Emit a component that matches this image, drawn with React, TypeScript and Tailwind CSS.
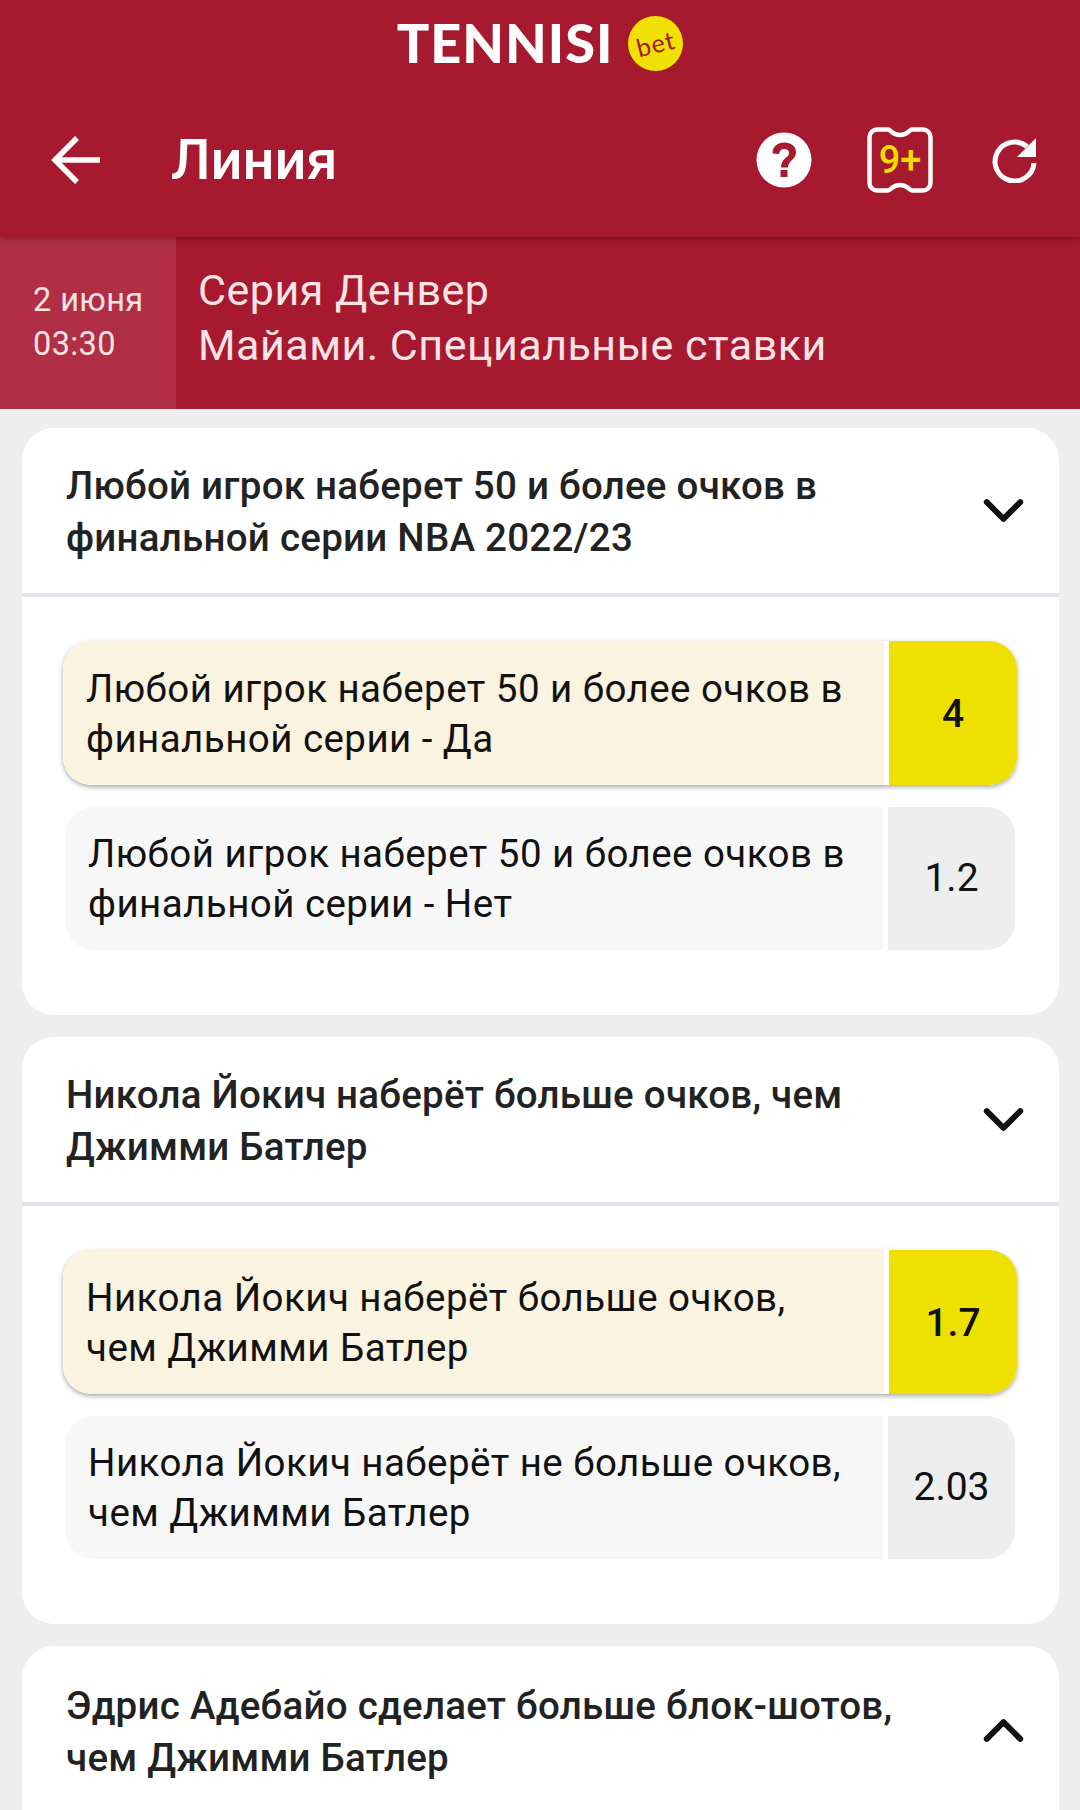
import { ChevronDown, ChevronUp } from 'lucide-react';

const markets = [
  {
    title: 'Любой игрок наберет 50 и более очков в финальной серии NBA 2022/23',
    rows: [
      { text: 'Любой игрок наберет 50 и более очков в финальной серии - Да', odds: '4' },
      { text: 'Любой игрок наберет 50 и более очков в финальной серии - Нет', odds: '1.2' },
    ],
  },
  {
    title: 'Никола Йокич наберёт больше очков, чем Джимми Батлер',
    rows: [
      { text: 'Никола Йокич наберёт больше очков, чем Джимми Батлер', odds: '1.7' },
      { text: 'Никола Йокич наберёт не больше очков, чем Джимми Батлер', odds: '2.03' },
    ],
  },
];

function Logo() {
  return (
    <div className="flex h-[86px] items-center justify-center">
      <span className="font-['Lato'] text-[54px] leading-none font-black tracking-[1px] text-white">TENNISI</span>
      <div className="ml-[15px] flex h-[55px] w-[55px] items-center justify-center rounded-full bg-[#f0e100]">
        <span className="-rotate-[14deg] font-['Lato'] text-[25px] leading-none tracking-[1px] text-[#a3192f]">bet</span>
      </div>
    </div>
  );
}

function BackIcon() {
  return (
    <svg width="50" height="50" viewBox="0 0 50 50" fill="none" stroke="white" strokeWidth="5.500">
      <path d="M49 25H5" />
      <path d="M26 3L4 25L26 47" />
    </svg>
  );
}

function HelpIcon() {
  return (
    <svg width="56" height="56" viewBox="0 0 56 56">
      <circle cx="28" cy="28" r="27.500" fill="white" />
      <path d="M16.500 21.500c0-7 5-11 11.800-11 6.800 0 11.700 3.800 11.700 9.700 0 7.800-8 8-8 15.300h-7c0-9.500 8-9.500 8-14.700 0-2.200-1.900-3.800-4.700-3.800-3 0-5 1.900-5.200 5z" fill="#a6192e" />
      <rect x="24.500" y="38" width="7" height="7" fill="#a6192e" />
    </svg>
  );
}

function CouponIcon() {
  return (
    <div className="relative flex h-[66px] w-[66px] items-center justify-center">
      <svg className="absolute inset-0" width="66" height="66" viewBox="0 0 66 66" fill="none" stroke="white" strokeWidth="4.500">
        <path d="M10 2.500H21C24 2.500 25 8 33 8C41 8 42 2.500 45 2.500H56C60 2.500 63.500 6 63.500 10V56C63.500 60 60 63.500 56 63.500H45C42 63.500 41 58 33 58C25 58 24 63.500 21 63.500H10C6 63.500 2.500 60 2.500 56V10C2.500 6 6 2.500 10 2.500Z" />
      </svg>
      <span className="relative font-['Roboto'] text-[38px] leading-none font-medium text-[#f5dc00]">9+</span>
    </div>
  );
}

function RefreshIcon() {
  return (
    <svg width="46" height="46" viewBox="0 0 46 46" fill="none">
      <path d="M35 9.500A19.500 19.500 0 1 0 42 26" stroke="white" strokeWidth="5" />
      <path d="M44 1V20H25z" fill="white" />
    </svg>
  );
}

function OutcomeRow({ text, odds, selected }: { text: string; odds: string; selected: boolean }) {
  return (
    <div
      className={
        selected
          ? 'flex h-[144px] overflow-hidden rounded-[28px] bg-white shadow-[0_2px_5px_rgba(0,0,0,0.35)]'
          : 'mx-[2px] flex h-[143px] overflow-hidden rounded-[28px] bg-white'
      }
    >
      <div
        className={
          selected
            ? 'flex flex-1 items-center bg-[#f9f3df] pl-[23px] pr-[30px] pt-[2px]'
            : 'flex flex-1 items-center bg-[#f7f7f7] pl-[23px] pr-[30px]'
        }
      >
        <p className="text-[38.5px] leading-[50px] tracking-[0.45px] text-[#111]">{text}</p>
      </div>
      <div
        className={
          selected
            ? 'ml-[5px] flex w-[128px] items-center justify-center bg-[#eee100] pt-[2px] text-[39px] font-medium text-[#111]'
            : 'ml-[5px] flex w-[127px] items-center justify-center bg-[#eeeeee] text-[39px] text-[#111]'
        }
      >
        {odds}
      </div>
    </div>
  );
}

export default function App() {
  return (
    <div className="h-[1810px] w-[1080px] overflow-hidden bg-[#eeeeee] font-['Roboto',sans-serif]">
      <header className="relative z-10 h-[237px] bg-[#a6192e] shadow-[0_2px_6px_rgba(0,0,0,0.25)]">
        <Logo />
        <div className="flex h-[147px] items-center pl-[51px] pr-[42px]">
          <BackIcon />
          <h1 className="ml-[70px] flex-1 text-[56px] font-medium text-white">Линия</h1>
          <HelpIcon />
          <div className="ml-[55px]">
            <CouponIcon />
          </div>
          <div className="ml-[59px]">
            <RefreshIcon />
          </div>
        </div>
      </header>

      <div className="flex h-[172px] bg-[#a6192e]">
        <div className="flex w-[176px] flex-col justify-center bg-[#b02f44] pb-[2px] pl-[33px] text-[32.5px] leading-[44px] tracking-[0.4px] text-[#fbe3e6]">
          <div>2 июня</div>
          <div>03:30</div>
        </div>
        <div className="flex flex-1 flex-col justify-center pb-[11px] pl-[22px] text-[43px] leading-[55px] tracking-[0.5px] text-[#fbe3e6]">
          <div>Серия Денвер</div>
          <div>Майами. Специальные ставки</div>
        </div>
      </div>

      <main className="flex flex-col gap-[22px] pl-[22px] pr-[21px] pt-[19px]">
        {markets.map((m) => (
          <section key={m.title} className="h-[587px] rounded-[32px] bg-white">
            <div className="flex h-[169px] items-center justify-between border-b-[4px] border-[#e2e2ea] pl-[44px] pr-[22px]">
              <h2 className="w-[840px] pt-[2px] text-[38.5px] leading-[52px] font-medium tracking-[0.25px] text-[#222]">{m.title}</h2>
              <ChevronDown size={67} strokeWidth={2.1} color="#111" />
            </div>
            <div className="flex flex-col gap-[22px] pl-[41px] pr-[42px] pt-[44px]">
              {m.rows.map((r, i) => (
                <OutcomeRow key={r.text} text={r.text} odds={r.odds} selected={i === 0} />
              ))}
            </div>
          </section>
        ))}
        <section className="h-[300px] rounded-[32px] bg-white">
          <div className="flex h-[169px] items-center justify-between pl-[44px] pr-[22px]">
            <h2 className="w-[840px] pt-[2px] text-[38.5px] leading-[52px] font-medium tracking-[0.25px] text-[#222]">
              Эдрис Адебайо сделает больше блок-шотов, чем Джимми Батлер
            </h2>
            <ChevronUp size={67} strokeWidth={2.1} color="#111" />
          </div>
        </section>
      </main>
    </div>
  );
}
